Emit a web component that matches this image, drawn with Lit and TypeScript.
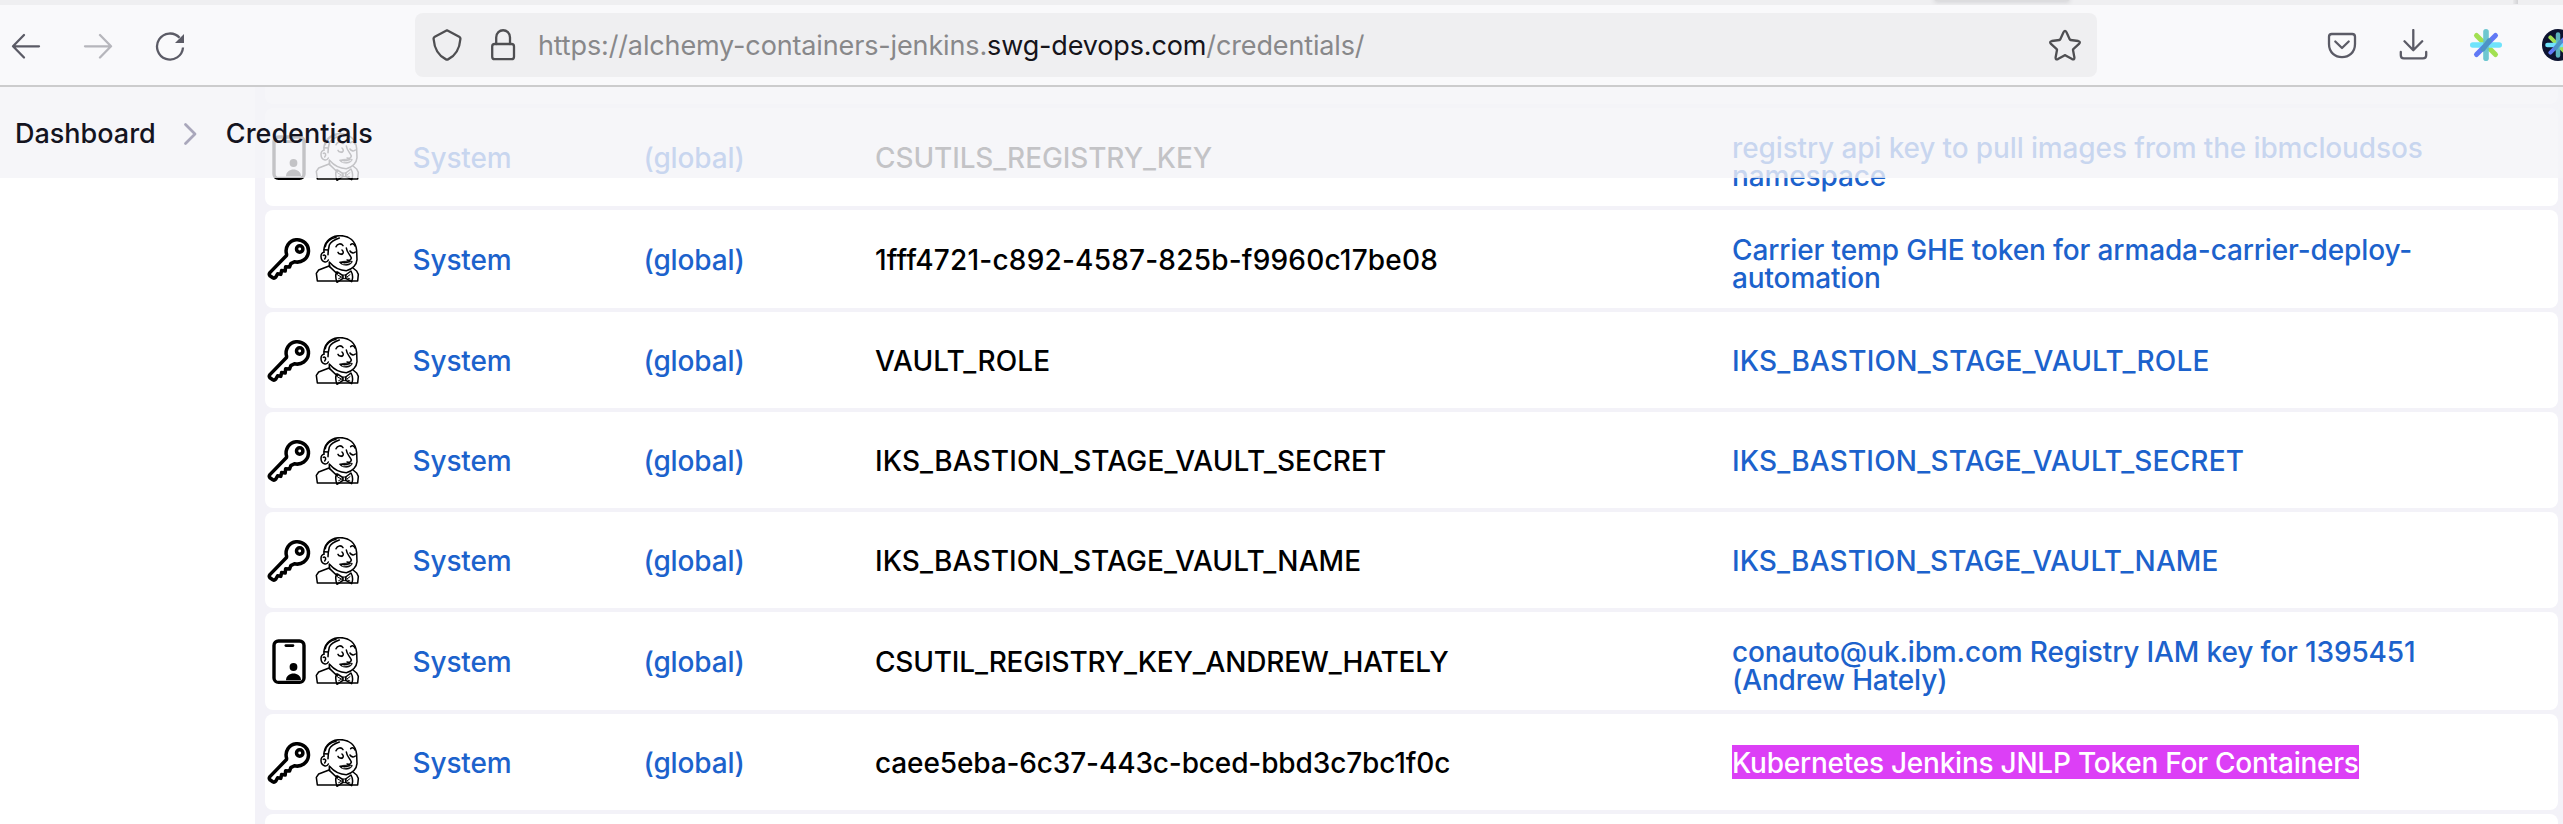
import { LitElement, html, css, svg } from "lit";
import { customElement, property } from "lit/decorators.js";

interface Cred {
  kind: "key" | "file";
  id: string;
  idSpacing: number;
  name: string[];
  nameSpacing: number;
  height: number;
  selected?: boolean;
}

const creds: Cred[] = [
  { kind: "file", id: "CSUTILS_REGISTRY_KEY", idSpacing: -0.12, name: ["registry api key to pull images from the ibmcloudsos", "namespace"], nameSpacing: -0.13, height: 98 },
  { kind: "key", id: "1fff4721-c892-4587-825b-f9960c17be08", idSpacing: 0.2, name: ["Carrier temp GHE token for armada-carrier-deploy-", "automation"], nameSpacing: -0.13, height: 98 },
  { kind: "key", id: "VAULT_ROLE", idSpacing: 0.12, name: ["IKS_BASTION_STAGE_VAULT_ROLE"], nameSpacing: 0.21, height: 96 },
  { kind: "key", id: "IKS_BASTION_STAGE_VAULT_SECRET", idSpacing: 0.14, name: ["IKS_BASTION_STAGE_VAULT_SECRET"], nameSpacing: 0.16, height: 96 },
  { kind: "key", id: "IKS_BASTION_STAGE_VAULT_NAME", idSpacing: 0.12, name: ["IKS_BASTION_STAGE_VAULT_NAME"], nameSpacing: 0.13, height: 96 },
  { kind: "file", id: "CSUTIL_REGISTRY_KEY_ANDREW_HATELY", idSpacing: -0.19, name: ["conauto@uk.ibm.com Registry IAM key for 1395451", "(Andrew Hately)"], nameSpacing: -0.14, height: 98 },
  { kind: "key", id: "caee5eba-6c37-443c-bced-bbd3c7bc1f0c", idSpacing: -0.13, name: ["Kubernetes Jenkins JNLP Token For Containers"], nameSpacing: -0.24, height: 96, selected: true },
];

const keyIcon = html`<svg width="48" height="48" viewBox="0 0 48 48" fill="none" stroke="#000" stroke-width="3.5" stroke-linejoin="round" stroke-linecap="round">
  <path d="M21.6 19.200A11.200 11.200 0 1 1 29.400 26.700L25.800 28.600 24.600 32 20.600 31.800 20.200 36 16.600 35.600 15.800 39.400 12.600 38.800 10.600 42.300Q9.300 43.700 7.800 42.800L4.900 40.800Q3.600 39.300 4.900 37.600L21.500 20.500Z"/>
  <circle cx="34.700" cy="14" r="3.200"/></svg>`;

const fileIcon = html`<svg width="48" height="48" viewBox="0 0 48 48">
  <rect x="9" y="4" width="30" height="41.400" rx="4.500" fill="none" stroke="#000" stroke-width="3.400"/>
  <path d="M20.800 8.600h7.200" stroke="#000" stroke-width="2.600" stroke-linecap="round"/>
  <circle cx="28.500" cy="30" r="3.900"/><path d="M21 43.300c0-9 15-9 15 0Z"/></svg>`;

const butlerIcon = html`<svg width="48" height="48" viewBox="153 27 144 144" fill="none" stroke="#000" stroke-width="4.600" stroke-linejoin="round" stroke-linecap="round">
  <path d="M186 78C184 52 202 30 232 29C262 28 282 46 284 74L285 101C284 116 272 130 253 134C234 133 216 124 204 110"/>
  <path d="M186 79C174 79 173 104 189 108C194 109 197 106 199 102M184 88C190 85 194 92 188 99"/>
  <path d="M186 71L199 72L202 57C206 48 215 42 232 36M199 72L198 86M190 62C193 47 204 38 222 34M202 108L202 122"/>
  <path d="M222 62C226 52 238 51 243 59M266 56C271 51 277 54 279 60"/>
  <path d="M228 79C231 85 238 86 243 82M240 72C246 77 244 83 240 85M264 75C268 82 276 82 280 78"/>
  <path d="M253 66C254 78 265 87 268 96C266 104 260 104 255 102"/>
  <path d="M233 108C243 107 249 104 255 107C261 103 265 106 271 106C268 119 247 122 235 112Z" fill="#000" stroke-width="2"/>
  <path d="M241 113C251 114 260 113 266 109" stroke="#fff" stroke-width="2.500"/>
  <path d="M203 119L170 132L163 142L166 165H287L289 145L284 135L273 126"/>
  <path d="M203 122L226 144M223 138C220 148 221 159 225 169L243 157V149L226 138ZM267 135L251 147V157L269 167C273 157 272 144 267 135Z"/>
  <path d="M242 147H252V158H242ZM228 148L237 152M230 158L238 154M256 152L264 146M257 156L264 159" stroke-width="3"/></svg>`;

@customElement("cred-row")
class CredRow extends LitElement {
  @property({ attribute: false }) cred!: Cred;

  static styles = css`
    :host { display: block; flex: none; }
    .row {
      display: grid;
      grid-template-columns: 147.500px 231px 231.500px 857px 1fr;
      align-items: center;
      background: #fff;
      border-radius: 8px;
      font-size: 28px;
      line-height: 28px;
      color: #000;
      white-space: nowrap;
    }
    .icons { display: flex; }
    .low { padding-top: 2px; }
    svg { display: block; flex: none; }
    .text { padding-top: 2px; letter-spacing: -0.15px; }
    .two { padding-top: 10px; }
    .link { color: #1c62cc; }
    .line { display: block; }
    .picked { display: inline-block; background: #dc3ff6; color: #fff; line-height: 32px; padding-top: 2px; }
    .flat { padding-top: 0; display: flex; }
  `;

  render() {
    const c = this.cred;
    const pad = c.selected ? "flat" : c.name.length > 1 ? "two" : "text";
    return html`<div class="row" style="height:${c.height}px">
      <div class="icons ${c.height === 96 ? "low" : ""}">${c.kind === "key" ? keyIcon : fileIcon}${butlerIcon}</div>
      <span class="text link">System</span>
      <span class="text link">(global)</span>
      <span class="text" style="letter-spacing:${c.idSpacing}px">${c.id}</span>
      <div class="link ${pad}" style="letter-spacing:${c.nameSpacing}px">
        ${c.name.map((t) => html`<span class="line ${c.selected ? "picked" : ""}">${t}</span>`)}
      </div>
    </div>`;
  }
}

const spokes = svg`<g stroke-linecap="round" fill="none">
  <path d="M-9.500-9.500L9.500 9.500" stroke="#a2e052" stroke-width="5"/>
  <path d="M-13.200 0H13.200" stroke="#6fe3fb" stroke-width="5.600"/>
  <path d="M9.500-9.500L-9.500 9.500" stroke="#6179f5" stroke-width="5"/>
  <path d="M0-13.200V13.200" stroke="#62c2cc" stroke-opacity=".92" stroke-width="5.600"/>
  <path d="M3-4L-3 4" stroke="#4d94c6" stroke-width="5"/></g>`;

@customElement("browser-bar")
class BrowserBar extends LitElement {
  static styles = css`
    :host { display: block; flex: none; }
    .strip { height: 5px; background: #efeff1; display: flex; overflow: hidden; }
    .tab { margin-left: 1935px; width: 134px; height: 1px; background: #dcdcde; border-radius: 0 0 8px 8px; box-shadow: 0 0 4px 1px #c8c8cc; }
    .sep { margin-left: 444px; width: 5px; height: 4px; background: linear-gradient(90deg, #e9e9eb, #d2d2d5); }
    .bar { height: 80px; background: #f9f9fb; border-bottom: 2px solid #cccccd; display: flex; align-items: center; padding-left: 10px; overflow: hidden; }
    .group { display: flex; gap: 40px; flex: none; }
    svg { display: block; flex: none; width: 32px; height: 32px; fill: none; stroke: #5b5b66; stroke-width: 2.3; stroke-linecap: round; stroke-linejoin: round; }
    .dim { opacity: 0.42; }
    .url { flex: none; box-sizing: border-box; width: 1682px; height: 64px; margin: 0 229px; padding: 0 16px; border-radius: 8px; background: #efeff1; display: flex; align-items: center; }
    .url svg { stroke: #4f4f52; }
    .lock { margin-left: 24px; }
    .addr { flex: 1; margin-left: 19px; padding-top: 2px; font-size: 27px; font-weight: 440; line-height: 32px; letter-spacing: -0.14px; color: #88888a; white-space: pre; }
    .addr b { font-weight: inherit; color: #15141a; }
  `;

  render() {
    return html`
      <div class="strip"><div class="tab"></div><div class="sep"></div></div>
      <div class="bar">
        <div class="group">
          <svg viewBox="0 0 32 32"><path d="M29 17.300H3.500M14 6L3 17.300L14 28.500"/></svg>
          <svg class="dim" viewBox="0 0 32 32"><path d="M3 17.300H28.500M18 6L29 17.300L18 28.500"/></svg>
          <svg viewBox="0 0 32 32"><path d="M25.600 8.700A13 13 0 1 0 29 18.500" stroke-linecap="butt"/><path d="M30 5V14H21Z" fill="#5b5b66" stroke="none"/></svg>
        </div>
        <div class="url">
          <svg viewBox="0 0 32 32"><path d="M16 1.300L28.200 7.700Q29.600 8.500 29.400 10C28.600 20 24 27 17 30.400Q16 30.900 15 30.400C8 27 3.400 20 2.600 10Q2.400 8.500 3.800 7.700Z"/></svg>
          <svg class="lock" viewBox="0 0 32 32"><rect x="5.200" y="15" width="21.800" height="15.200" rx="2.500"/><path d="M9.200 15V8.500C9.200-1.200 23 -1.200 23 8.500V15"/></svg>
          <div class="addr">https://alchemy-containers-jenkins.<b>swg-devops.com</b>/credentials/</div>
          <svg viewBox="0 0 32 32"><path d="M14.500 3.200Q16 .6 17.500 3.200L20.800 10.400Q21 10.900 21.600 11L29.200 12Q32 12.700 30 14.900L24.300 20.100Q23.900 20.500 24 21L25.400 28.500Q25.500 31.100 23.100 30.100L16.600 26.400Q16 26.100 15.400 26.400L8.900 30.100Q6.500 31.100 6.600 28.500L8 21Q8.100 20.500 7.700 20.100L2 14.900Q0 12.700 2.800 12L10.400 11Q11 10.900 11.200 10.400Z"/></svg>
        </div>
        <div class="group">
          <svg viewBox="0 0 32 32"><path d="M5.800 5H26.200Q29 5 29 7.800V15C29 32.600 3 32.600 3 15V7.800Q3 5 5.800 5ZM9.300 12.500L16 19L22.700 12.500"/></svg>
          <svg viewBox="0 0 32 32"><path d="M15.300 1V20.500M6.500 12.300L15.300 21.300L24.200 12.300M2.800 23V26.200Q2.800 29.300 5.800 29.300H25Q28.200 29.300 28.200 26.200V23"/></svg>
          <svg viewBox="-16 -16 32 32">${spokes}</svg>
          <svg viewBox="-16 -16 32 32"><circle r="16" fill="#0d1330" stroke="none"/><g transform="scale(.8)">${spokes}</g></svg>
        </div>
      </div>`;
  }
}

@customElement("app-root")
class AppRoot extends LitElement {
  static styles = css`
    :host {
      display: flex;
      flex-direction: column;
      width: 2563px;
      height: 824px;
      overflow: hidden;
      background: #f3f2f8;
      font-family: Inter, "Liberation Sans", sans-serif;
      font-weight: 450;
    }
    .page { position: relative; flex: none; display: flex; height: 737px; overflow: hidden; }
    .side { width: 255px; flex: none; background: #fff; }
    .rows { flex: 1; display: flex; flex-direction: column; gap: 4px; padding: 0 5px 0 10px; }
    .edge { flex: none; height: 17px; background: #fff; border-radius: 0 0 8px 8px; }
    .tail { height: 40px; border-radius: 8px; }
    .crumbs {
      position: absolute;
      inset: 0 0 auto 0;
      height: 91px;
      box-sizing: border-box;
      padding: 2px 0 0 15px;
      display: flex;
      align-items: center;
      background: rgba(244, 244, 247, 0.8);
      color: #14141f;
      font-size: 27px;
      line-height: 32px;
    }
    .crumbs svg { margin: 0 28px 0 26px; display: block; }
  `;

  render() {
    return html`
      <browser-bar></browser-bar>
      <div class="page">
        <div class="side"></div>
        <div class="rows">
          <div class="edge"></div>
          ${creds.map((c) => html`<cred-row .cred=${c}></cred-row>`)}
          <div class="edge tail"></div>
        </div>
        <div class="crumbs">
          <span>Dashboard</span>
          <svg width="16" height="24" viewBox="0 0 16 24" fill="none" stroke="#a9a7bb" stroke-width="2.800" stroke-linecap="round" stroke-linejoin="round"><path d="M3.500 2.500L13 12L3.500 21.500"/></svg>
          <span>Credentials</span>
        </div>
      </div>`;
  }
}
